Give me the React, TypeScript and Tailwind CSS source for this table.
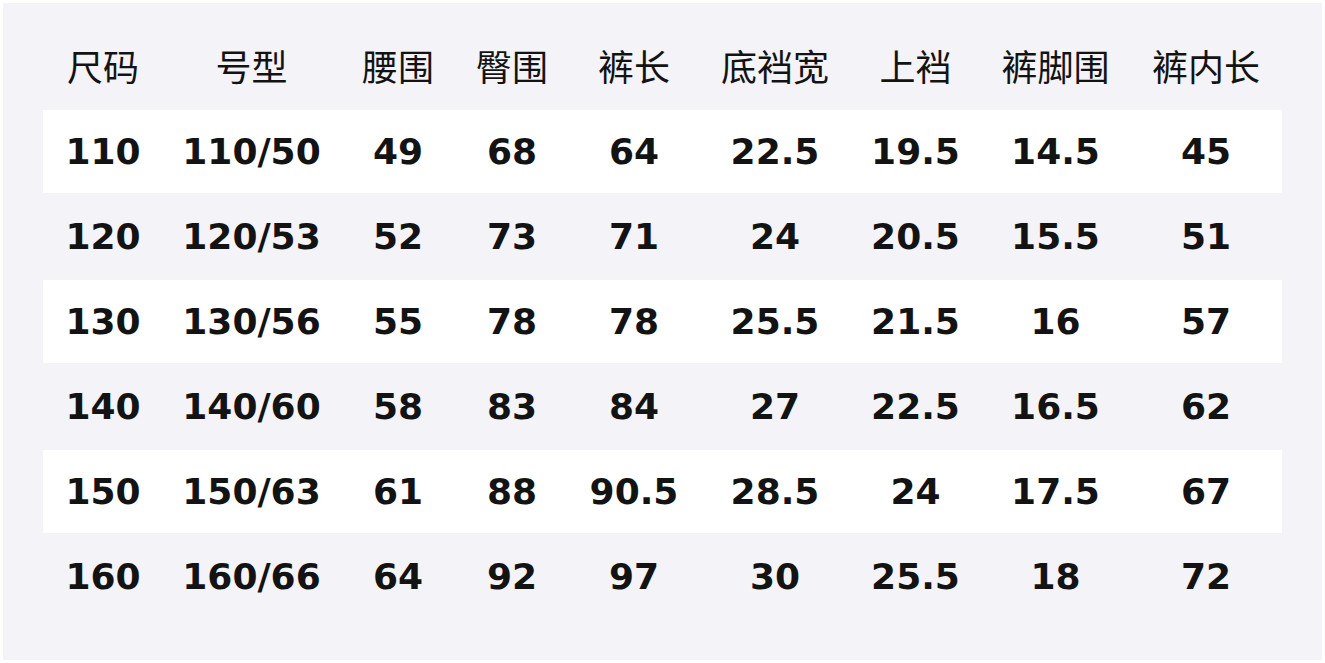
const headers = ["尺码", "号型", "腰围", "臀围", "裤长", "底裆宽", "上裆", "裤脚围", "裤内长"]

const rows = [
  ["110", "110/50", "49", "68", "64", "22.5", "19.5", "14.5", "45"],
  ["120", "120/53", "52", "73", "71", "24", "20.5", "15.5", "51"],
  ["130", "130/56", "55", "78", "78", "25.5", "21.5", "16", "57"],
  ["140", "140/60", "58", "83", "84", "27", "22.5", "16.5", "62"],
  ["150", "150/63", "61", "88", "90.5", "28.5", "24", "17.5", "67"],
  ["160", "160/66", "64", "92", "97", "30", "25.5", "18", "72"],
]

const cols = "grid grid-cols-[120px_177px_116px_112px_132px_150px_131px_149px_152px]"

export default function App() {
  return (
    <div className="w-[1325px] h-[663px] bg-white p-[3px] font-['DejaVu_Sans','Noto_Sans_CJK_SC',sans-serif] text-[#131313]">
      <div className="h-full w-full bg-[#f3f3f8] px-10 pt-[17px]">
        {/* header */}
        <div className={`${cols} h-[89px] items-center text-[36px] font-['Noto_Sans_CJK_SC',sans-serif]`}>
          {headers.map((h) => (
            <div key={h} className="text-center leading-none">
              {h}
            </div>
          ))}
        </div>

        {/* body */}
        {rows.map((row, i) => (
          <div
            key={row[0]}
            className={`${cols} h-[85px] items-center border-y border-[#f3f3f8] text-[36px] font-bold ${
              i % 2 === 0 ? "bg-white" : ""
            }`}
          >
            {row.map((cell, j) => (
              <div key={j} className="text-center leading-none">
                {cell}
              </div>
            ))}
          </div>
        ))}
      </div>
    </div>
  )
}
